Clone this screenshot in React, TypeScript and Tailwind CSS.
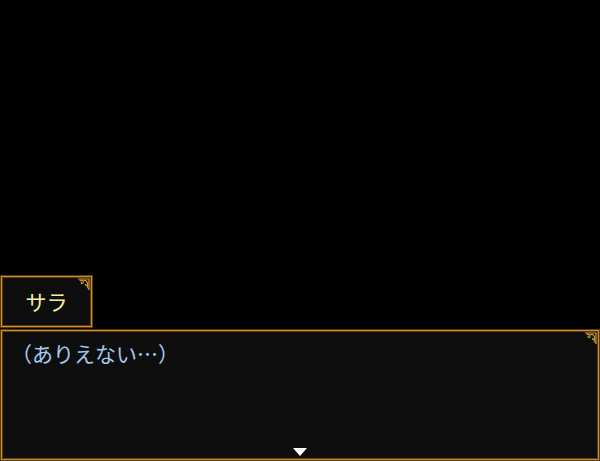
import React from "react";

const Ornament = () => (
  <svg width="14" height="14" viewBox="0 0 14 14" className="absolute right-[1px] top-[1px]" fill="none">
    <path d="M1 2 H12 V13" stroke="#d49a3a" strokeWidth="1.2" />
    <path d="M3 3.5 C5 2.5 7 4 6 6 C5 7.5 3.5 6 4.5 5 M7 3.5 C9 3 11 5 10.5 7 C10 9 8 8.5 8.5 7.5 M10.5 8 C9.5 10 11 11 11.5 11.5" stroke="#d49a3a" strokeWidth="1.1" strokeLinecap="round" />
  </svg>
);

export default function App() {
  const frame =
    "relative border border-[#5c3a0e] bg-[#0e0e0e] shadow-[inset_0_0_0_1px_#c98f35,inset_0_0_0_2px_#5c3a0e]";
  return (
    <div
      className="w-[600px] h-[461px] bg-black flex flex-col justify-end overflow-hidden"
      style={{ fontFamily: '"Noto Sans CJK JP", "Noto Sans", sans-serif' }}
    >
      <div className={`${frame} w-[93px] h-[53px] flex items-center justify-center mb-[1px]`}>
        <span className="text-[21px] text-[#f4f0a4] leading-none">サラ</span>
        <Ornament />
      </div>
      <div className={`${frame} w-[600px] h-[132px]`}>
        <div className="pl-[10px] pt-[10px] text-[21px] text-[#a6c8ee] leading-[26px]">（ありえない…）</div>
        <Ornament />
        <div className="absolute left-1/2 -translate-x-1/2 bottom-[4px] w-0 h-0 border-l-[7px] border-r-[7px] border-t-[8px] border-l-transparent border-r-transparent border-t-white" />
      </div>
    </div>
  );
}
